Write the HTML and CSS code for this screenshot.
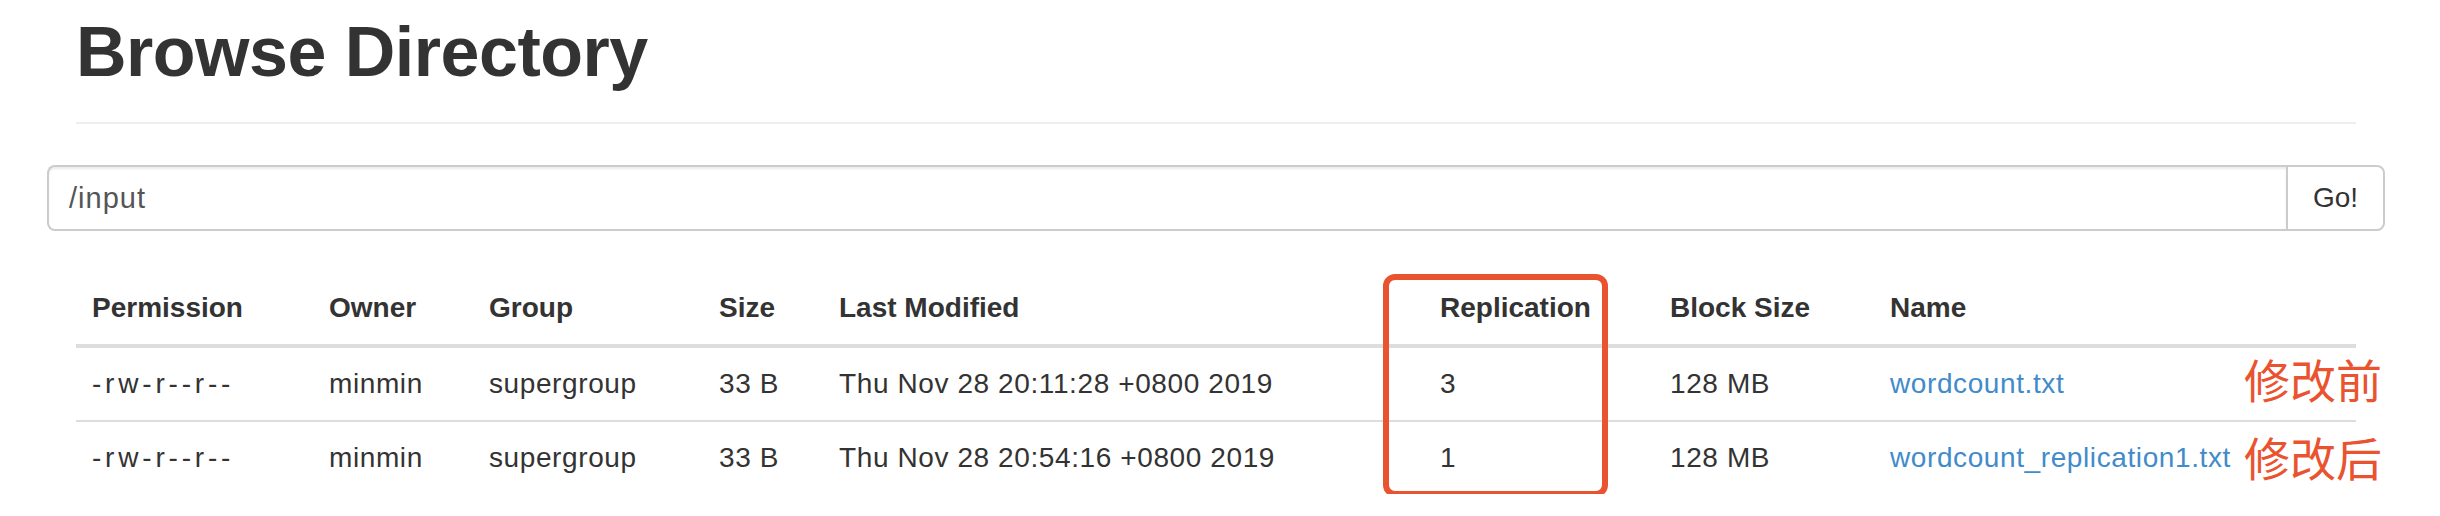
FILE: index.html
```html
<!DOCTYPE html>
<html lang="en">
<head>
<meta charset="utf-8">
<title>Browse Directory</title>
<link rel="stylesheet" href="styles.css">
</head>
<body>
<div class="page">
  <div class="page-header">
    <h1>Browse Directory</h1>
  </div>

  <div class="nav-row">
    <div class="input-group">
      <input class="path-input" type="text" value="/input">
      <button class="go-btn" type="button">Go!</button>
    </div>
  </div>

  <div class="table-wrap">
    <table class="listing">
      <colgroup>
        <col class="c-perm">
        <col class="c-owner">
        <col class="c-group">
        <col class="c-size">
        <col class="c-mod">
        <col class="c-rep">
        <col class="c-block">
        <col class="c-name">
      </colgroup>
      <thead>
        <tr>
          <th>Permission</th>
          <th>Owner</th>
          <th>Group</th>
          <th>Size</th>
          <th>Last Modified</th>
          <th>Replication</th>
          <th>Block Size</th>
          <th>Name</th>
        </tr>
      </thead>
      <tbody>
        <tr>
          <td class="perm">-rw-r--r--</td>
          <td>minmin</td>
          <td>supergroup</td>
          <td>33 B</td>
          <td>Thu Nov 28 20:11:28 +0800 2019</td>
          <td>3</td>
          <td>128 MB</td>
          <td><a class="file-link" href="#">wordcount.txt</a></td>
        </tr>
        <tr>
          <td class="perm">-rw-r--r--</td>
          <td>minmin</td>
          <td>supergroup</td>
          <td>33 B</td>
          <td>Thu Nov 28 20:54:16 +0800 2019</td>
          <td>1</td>
          <td>128 MB</td>
          <td><a class="file-link" href="#">wordcount_replication1.txt</a></td>
        </tr>
      </tbody>
    </table>
    <div class="highlight-box"></div>
    <span class="note note-before">修改前</span>
    <span class="note note-after">修改后</span>
  </div>
</div>
</body>
</html>
```

FILE: styles.css
```css
html, body {
  margin: 0;
  padding: 0;
  background: #fff;
}

body {
  font-family: "Liberation Sans", Helvetica, Arial, sans-serif;
  font-size: 28px;
  line-height: 40px;
  color: #333;
}

.page {
  width: 2280px;
  padding: 0 84px 0 76px;
}

.page-header {
  padding: 13px 0 30px;
  border-bottom: 2px solid #eee;
}

.page-header h1 {
  margin: 0;
  font-size: 70px;
  line-height: 79px;
  font-weight: 700;
  color: #333;
  letter-spacing: -0.5px;
}

.nav-row {
  margin: 41px -29px 0;
}

.input-group {
  display: flex;
  height: 66px;
}

.path-input {
  flex: 1;
  min-width: 0;
  box-sizing: border-box;
  height: 66px;
  margin: 0;
  padding: 0 20px;
  border: 2px solid #ccc;
  border-right: 0;
  border-radius: 8px 0 0 8px;
  box-shadow: inset 0 2px 2px rgba(0, 0, 0, 0.075);
  font-family: "Liberation Sans", Helvetica, Arial, sans-serif;
  font-size: 29px;
  letter-spacing: 1px;
  color: #555;
  background: #fff;
  outline: none;
}

.go-btn {
  box-sizing: border-box;
  width: 99px;
  height: 66px;
  margin: 0;
  padding: 0;
  border: 2px solid #ccc;
  border-radius: 0 8px 8px 0;
  background: #fff;
  font-family: "Liberation Sans", Helvetica, Arial, sans-serif;
  font-size: 28px;
  color: #333;
}

.table-wrap {
  position: relative;
  margin-top: 41px;
}

.listing {
  width: 2280px;
  table-layout: fixed;
  border-collapse: collapse;
  border-spacing: 0;
}

.c-perm { width: 237px; }
.c-owner { width: 160px; }
.c-group { width: 230px; }
.c-size { width: 120px; }
.c-mod { width: 601px; }
.c-rep { width: 230px; }
.c-block { width: 220px; }
.c-name { width: 482px; }

.listing th,
.listing td {
  padding: 16px;
  text-align: left;
  vertical-align: top;
  line-height: 40px;
  white-space: nowrap;
}

.listing th {
  font-weight: 700;
  border-bottom: 4px solid #ddd;
}

.listing td {
  border-top: 2px solid #ddd;
  letter-spacing: 0.6px;
}

.listing td.perm {
  letter-spacing: 3.8px;
}

.file-link {
  color: #428bca;
  text-decoration: none;
}

.highlight-box {
  position: absolute;
  left: 1307px;
  top: 2px;
  width: 225px;
  height: 223px;
  box-sizing: border-box;
  border: 6px solid #ea5330;
  border-radius: 12px;
}

.note {
  position: absolute;
  left: 2168px;
  font-family: "Noto Sans CJK SC", sans-serif;
  font-size: 46px;
  line-height: 46px;
  color: #ea5330;
  white-space: nowrap;
}

.note-before { top: 83px; }
.note-after { top: 161px; }
```
